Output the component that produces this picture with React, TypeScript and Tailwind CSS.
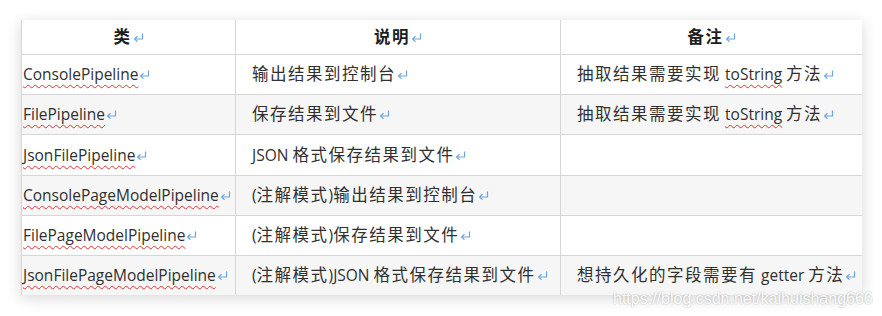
import React from "react";

const CJK = /[\u3000-\u9fff\uff00-\uffef]/;

function Ret() {
  return (
    <svg
      width="11"
      height="9"
      viewBox="0 0 11 9"
      className="inline-block ml-[1px] align-[1px]"
      fill="none"
      stroke="#6aa6dc"
      strokeWidth="1.2"
    >
      <path d="M9.5 0.5 V6 H2" />
      <path d="M4.5 3.3 L1.6 6 L4.5 8.7" />
    </svg>
  );
}

function Txt({ text, bold = false }: { text: string; bold?: boolean }) {
  const runs: { s: string; c: boolean }[] = [];
  for (const ch of text) {
    const c = CJK.test(ch);
    const last = runs[runs.length - 1];
    if (last && last.c === c) last.s += ch;
    else runs.push({ s: ch, c });
  }
  return (
    <>
      {runs.map((r, i) =>
        r.c ? (
          <span key={i} className={"text-[16.5px] tracking-[1.5px] " + (bold ? "font-bold" : "")}>
            {r.s}
          </span>
        ) : (
          <span key={i} className={"text-[15.5px] " + (bold ? "font-bold" : "")}>
            {r.s}
          </span>
        )
      )}
    </>
  );
}

function Wavy({ children }: { children: React.ReactNode }) {
  return (
    <span className="underline decoration-wavy decoration-[#e0352b] decoration-[1px] underline-offset-[4px]">
      {children}
    </span>
  );
}

type Row = { a: React.ReactNode; b: React.ReactNode; c: React.ReactNode; gray: boolean; h: string };

export default function App() {
  const rows: Row[] = [
    {
      a: <Wavy><Txt text="ConsolePipeline" /></Wavy>,
      b: <Txt text="输出结果到控制台" />,
      c: (
        <>
          <Txt text="抽取结果需要实现 " />
          <Wavy><Txt text="toString" /></Wavy>
          <Txt text=" 方法" />
        </>
      ),
      gray: false,
      h: "h-[40px]",
    },
    {
      a: <Wavy><Txt text="FilePipeline" /></Wavy>,
      b: <Txt text="保存结果到文件" />,
      c: (
        <>
          <Txt text="抽取结果需要实现 " />
          <Wavy><Txt text="toString" /></Wavy>
          <Txt text=" 方法" />
        </>
      ),
      gray: true,
      h: "h-[40px]",
    },
    {
      a: <Wavy><Txt text="JsonFilePipeline" /></Wavy>,
      b: <Txt text="JSON 格式保存结果到文件" />,
      c: null,
      gray: false,
      h: "h-[41px]",
    },
    {
      a: <Wavy><Txt text="ConsolePageModelPipeline" /></Wavy>,
      b: <Txt text="(注解模式)输出结果到控制台" />,
      c: null,
      gray: true,
      h: "h-[40px]",
    },
    {
      a: <Wavy><Txt text="FilePageModelPipeline" /></Wavy>,
      b: <Txt text="(注解模式)保存结果到文件" />,
      c: null,
      gray: false,
      h: "h-[40px]",
    },
    {
      a: <Wavy><Txt text="JsonFilePageModelPipeline" /></Wavy>,
      b: <Txt text="(注解模式)JSON 格式保存结果到文件" />,
      c: <Txt text="想持久化的字段需要有 getter 方法" />,
      gray: true,
      h: "h-[40px]",
    },
  ];

  return (
    <div
      className="relative w-[882px] h-[316px] bg-white overflow-hidden text-[#303030]"
      style={{ fontFamily: '"Open Sans", "Noto Sans CJK SC", sans-serif' }}
    >
      <div className="pt-[20px] pl-[21px]">
        <div className="w-[841px] border-l border-[#d6d6d6] bg-white shadow-[0_3px_14px_rgba(0,0,0,0.16)]">
          <div className="flex h-[34px] bg-white">
            <div className="w-[213px] flex items-center justify-center text-[#1e1e1e]">
              <span><Txt text="类" bold /><Ret /></span>
            </div>
            <div className="w-[325px] border-l border-[#d6d6d6] flex items-center justify-center text-[#1e1e1e]">
              <span><Txt text="说明" bold /><Ret /></span>
            </div>
            <div className="flex-1 border-l border-[#d6d6d6] flex items-center justify-center text-[#1e1e1e]">
              <span><Txt text="备注" bold /><Ret /></span>
            </div>
          </div>
          {rows.map((r, i) => (
            <div
              key={i}
              className={"flex border-t border-[#d6d6d6] " + r.h + " " + (r.gray ? "bg-[#f6f6f6]" : "bg-white")}
            >
              <div className="w-[213px] flex items-center pl-[1px] whitespace-nowrap">
                <span>{r.a}<Ret /></span>
              </div>
              <div className="w-[325px] border-l border-[#d6d6d6] flex items-center pl-[16px] whitespace-nowrap">
                <span>{r.b}<Ret /></span>
              </div>
              <div className="flex-1 border-l border-[#d6d6d6] flex items-center pl-[16px] whitespace-nowrap">
                {r.c ? <span>{r.c}<Ret /></span> : null}
              </div>
            </div>
          ))}
        </div>
      </div>
      <div
        className="absolute left-[613px] top-[287px] text-[16px] text-white/95 [text-shadow:0_0_2px_rgba(0,0,0,0.3)] whitespace-nowrap"
        style={{ fontFamily: '"Liberation Sans", Arial, sans-serif' }}
      >
        https://blog.csdn.net/kaihuishang666
      </div>
    </div>
  );
}
